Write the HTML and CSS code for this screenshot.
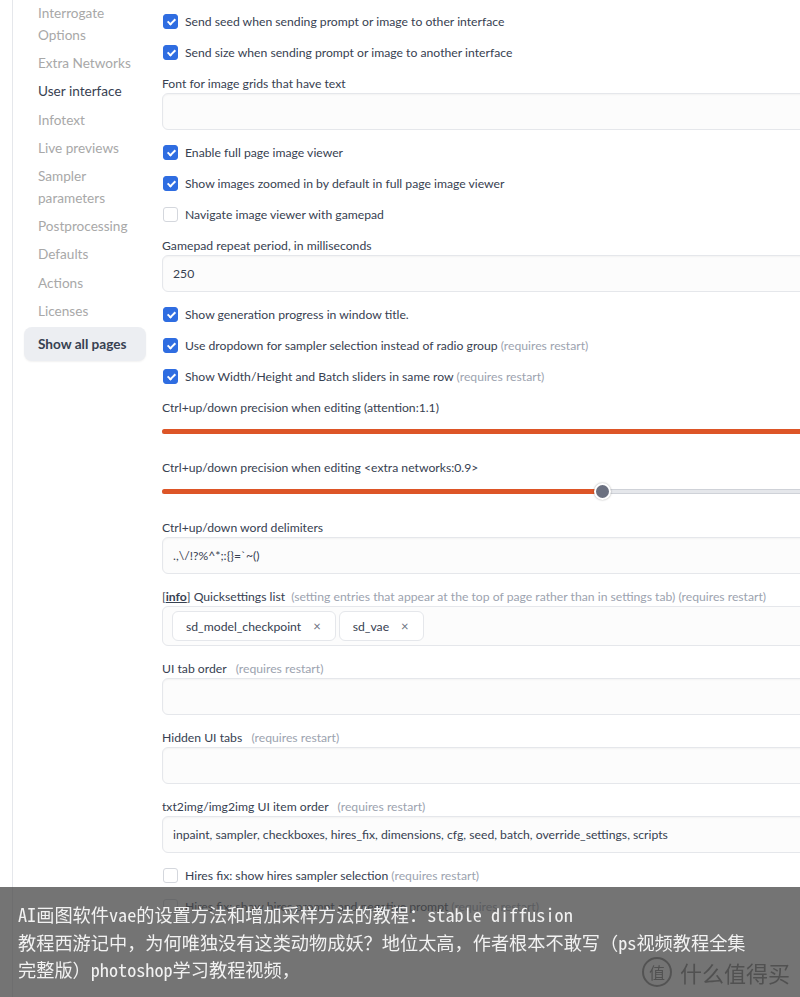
FILE: index.html
```html
<!DOCTYPE html>
<html lang="en">
<head>
    <meta charset="UTF-8">
    <meta name="viewport" content="width=device-width, initial-scale=1.0">
    <title>Settings - User interface</title>
    <link rel="stylesheet" href="styles.css">
</head>
<body>
    <div class="page">
        <nav class="sidebar">
            <a class="nav-item">Interrogate Options</a>
            <a class="nav-item">Extra Networks</a>
            <a class="nav-item active">User interface</a>
            <a class="nav-item">Infotext</a>
            <a class="nav-item">Live previews</a>
            <a class="nav-item">Sampler parameters</a>
            <a class="nav-item">Postprocessing</a>
            <a class="nav-item">Defaults</a>
            <a class="nav-item">Actions</a>
            <a class="nav-item">Licenses</a>
            <button class="show-all">Show all pages</button>
        </nav>

        <main class="settings">
            <label class="check"><span class="box on"></span>Send seed when sending prompt or image to other interface</label>
            <label class="check"><span class="box on"></span>Send size when sending prompt or image to another interface</label>

            <div class="field">
                <div class="field-label">Font for image grids that have text</div>
                <div class="input"></div>
            </div>

            <label class="check"><span class="box on"></span>Enable full page image viewer</label>
            <label class="check"><span class="box on"></span>Show images zoomed in by default in full page image viewer</label>
            <label class="check"><span class="box"></span>Navigate image viewer with gamepad</label>

            <div class="field">
                <div class="field-label">Gamepad repeat period, in milliseconds</div>
                <div class="input">250</div>
            </div>

            <label class="check"><span class="box on"></span>Show generation progress in window title.</label>
            <label class="check"><span class="box on"></span>Use dropdown for sampler selection instead of radio group <span class="note">(requires restart)</span></label>
            <label class="check"><span class="box on"></span>Show Width/Height and Batch sliders in same row <span class="note">(requires restart)</span></label>

            <div class="slider-field">
                <div class="field-label">Ctrl+up/down precision when editing (attention:1.1)</div>
                <div class="track"><div class="fill full"></div></div>
            </div>

            <div class="slider-field">
                <div class="field-label">Ctrl+up/down precision when editing &lt;extra networks:0.9&gt;</div>
                <div class="track"><div class="fill" style="width: 441px"><span class="thumb"></span></div></div>
            </div>

            <div class="field">
                <div class="field-label">Ctrl+up/down word delimiters</div>
                <div class="input">.,\/!?%^*;:{}=`~()</div>
            </div>

            <div class="field">
                <div class="field-label">[<b class="info">info</b>] Quicksettings list <span class="note">(setting entries that appear at the top of page rather than in settings tab) (requires restart)</span></div>
                <div class="multi">
                    <span class="chip">sd_model_checkpoint <span class="x">×</span></span>
                    <span class="chip">sd_vae <span class="x">×</span></span>
                </div>
            </div>

            <div class="field">
                <div class="field-label">UI tab order &nbsp;<span class="note">(requires restart)</span></div>
                <div class="input"></div>
            </div>

            <div class="field">
                <div class="field-label">Hidden UI tabs &nbsp;<span class="note">(requires restart)</span></div>
                <div class="input"></div>
            </div>

            <div class="field">
                <div class="field-label">txt2img/img2img UI item order &nbsp;<span class="note">(requires restart)</span></div>
                <div class="input">inpaint, sampler, checkboxes, hires_fix, dimensions, cfg, seed, batch, override_settings, scripts</div>
            </div>

            <label class="check"><span class="box"></span>Hires fix: show hires sampler selection <span class="note">(requires restart)</span></label>
            <label class="check"><span class="box"></span>Hires fix: show hires prompt and negative prompt <span class="note">(requires restart)</span></label>
        </main>
    </div>

    <div class="caption">
        <div>AI画图软件vae的设置方法和增加采样方法的教程：stable diffusion</div>
        <div>教程西游记中，为何唯独没有这类动物成妖？地位太高，作者根本不敢写（ps视频教程全集</div>
        <div>完整版）photoshop学习教程视频，</div>
        <div class="mark"><span class="mark-logo">值</span>什么值得买</div>
    </div>
</body>
</html>
```

FILE: styles.css
```css
body {
    margin: 0;
    font-family: Lato, "Open Sans", sans-serif;
    background: #fff;
    color: #374151;
    overflow: hidden;
    height: 997px;
}

.page {
    display: flex;
    min-height: 997px;
}

/* left nav */
.sidebar {
    flex: 0 0 auto;
    width: 149px;
    margin-left: 12px;
    border-left: 1px solid #e5e7eb;
    padding-top: 2px;
    display: flex;
    flex-direction: column;
    align-items: flex-start;
}
.nav-item {
    display: block;
    max-width: 108px;
    padding-left: 25px;
    margin-bottom: 6.2px;
    font-size: 13.6px;
    line-height: 22px;
    color: #a8a8a8;
}
.nav-item.active { color: #374151; }

.show-all {
    margin: -1px 0 0 11px;
    width: 122px;
    height: 34px;
    padding: 0 14px;
    text-align: left;
    border: none;
    border-radius: 8px;
    background: #eceef2;
    box-shadow: 0 1px 2px rgba(0, 0, 0, 0.06);
    font-family: inherit;
    font-size: 13.6px;
    font-weight: 700;
    color: #374151;
}

/* settings column */
.settings {
    flex: 0 0 auto;
    width: 700px;
    padding-top: 6px;
    font-size: 12.2px;
}

.check {
    display: flex;
    align-items: center;
    height: 31px;
    white-space: nowrap;
}
.box {
    position: relative;
    width: 15px;
    height: 15px;
    margin: 0 7px 0 1px;
    box-sizing: border-box;
    border: 1px solid #d4d7dd;
    border-radius: 3px;
    background: #fff;
}
.box.on {
    background: #2f6de1;
    border-color: #2f6de1;
}
.box.on::after {
    content: "";
    position: absolute;
    left: 4.5px;
    top: 2px;
    width: 3px;
    height: 6px;
    border: solid #fff;
    border-width: 0 2px 2px 0;
    transform: rotate(45deg);
}
.note {
    color: #9ca3af;
    margin-left: 3px;
}

.field {
    padding: 7px 0;
}
.field-label {
    line-height: 18px;
    white-space: nowrap;
}
.input {
    height: 37px;
    box-sizing: border-box;
    padding: 0 10px;
    line-height: 36px;
    border: 1px solid #e5e7eb;
    border-radius: 6px;
    background: #fcfcfc;
    box-shadow: inset 0 1px 2px rgba(0, 0, 0, 0.04);
    white-space: nowrap;
}
.info {
    text-decoration: underline;
}

.multi {
    height: 40px;
    box-sizing: border-box;
    display: flex;
    align-items: center;
    gap: 3px;
    padding-left: 9px;
    border: 1px solid #e5e7eb;
    border-radius: 6px;
    background: #fcfcfc;
}
.chip {
    display: flex;
    align-items: center;
    height: 30px;
    box-sizing: border-box;
    padding: 0 14px 0 13px;
    border: 1px solid #e5e7eb;
    border-radius: 6px;
    background: #fff;
}
.chip .x {
    margin-left: 12px;
    color: #6b7280;
    font-size: 13px;
}

/* sliders */
.slider-field {
    padding: 7px 0 18px;
}
.track {
    margin-top: 12px;
    height: 5px;
    border-radius: 3px;
    background: #e5e7eb;
    box-shadow: inset 0 0 0 1px #cfd2d8;
}
.fill {
    position: relative;
    height: 5px;
    border-radius: 3px 0 0 3px;
    background: #dd5527;
}
.fill.full { width: 100%; }
.thumb {
    position: absolute;
    right: -8px;
    top: -6px;
    width: 13px;
    height: 13px;
    border-radius: 50%;
    background: #6b7080;
    border: 2px solid #fff;
    box-shadow: 0 0 2px rgba(0, 0, 0, 0.35);
}

/* caption bar laid over the screenshot */
.caption {
    position: fixed;
    left: 0;
    right: 0;
    bottom: 0;
    height: 110px;
    box-sizing: border-box;
    padding: 14px 0 0 18px;
    background: rgba(70, 70, 70, 0.75);
    color: #f2f2f2;
    font-family: "Noto Sans Mono CJK SC", "Noto Sans CJK SC", monospace;
    font-size: 18.2px;
    line-height: 27.5px;
    white-space: nowrap;
}
.mark {
    position: absolute;
    right: 10px;
    bottom: 10px;
    display: flex;
    align-items: center;
    font-family: "Noto Sans CJK SC", sans-serif;
    font-size: 22px;
    line-height: 28px;
    color: rgba(45, 45, 45, 0.5);
}
.mark-logo {
    display: inline-block;
    width: 26px;
    height: 26px;
    margin-right: 8px;
    border: 2px solid rgba(45, 45, 45, 0.45);
    border-radius: 50%;
    font-size: 16px;
    line-height: 26px;
    text-align: center;
}
```
